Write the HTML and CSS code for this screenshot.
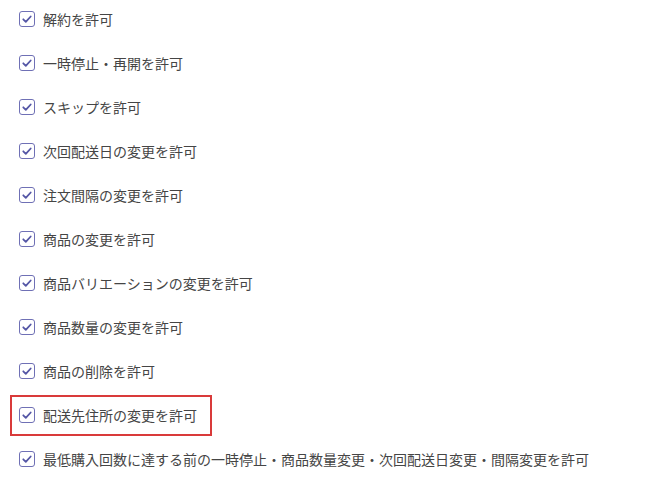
FILE: index.html
```html
<!DOCTYPE html>
<html lang="ja">
<head>
    <meta charset="UTF-8">
    <title>設定</title>
    <link rel="stylesheet" href="styles.css">
</head>
<body>

    <ul class="perm-list">
        <li class="perm"><span class="check"><svg viewBox="0 0 16 16"><path d="M4.3 8.3l2.5 2.5 4.9-5.3"/></svg></span>解約を許可</li>
        <li class="perm"><span class="check"><svg viewBox="0 0 16 16"><path d="M4.3 8.3l2.5 2.5 4.9-5.3"/></svg></span>一時停止・再開を許可</li>
        <li class="perm"><span class="check"><svg viewBox="0 0 16 16"><path d="M4.3 8.3l2.5 2.5 4.9-5.3"/></svg></span>スキップを許可</li>
        <li class="perm"><span class="check"><svg viewBox="0 0 16 16"><path d="M4.3 8.3l2.5 2.5 4.9-5.3"/></svg></span>次回配送日の変更を許可</li>
        <li class="perm"><span class="check"><svg viewBox="0 0 16 16"><path d="M4.3 8.3l2.5 2.5 4.9-5.3"/></svg></span>注文間隔の変更を許可</li>
        <li class="perm"><span class="check"><svg viewBox="0 0 16 16"><path d="M4.3 8.3l2.5 2.5 4.9-5.3"/></svg></span>商品の変更を許可</li>
        <li class="perm"><span class="check"><svg viewBox="0 0 16 16"><path d="M4.3 8.3l2.5 2.5 4.9-5.3"/></svg></span>商品バリエーションの変更を許可</li>
        <li class="perm"><span class="check"><svg viewBox="0 0 16 16"><path d="M4.3 8.3l2.5 2.5 4.9-5.3"/></svg></span>商品数量の変更を許可</li>
        <li class="perm"><span class="check"><svg viewBox="0 0 16 16"><path d="M4.3 8.3l2.5 2.5 4.9-5.3"/></svg></span>商品の削除を許可</li>
        <!-- 強調表示の行 -->
        <li class="perm highlight"><span class="check"><svg viewBox="0 0 16 16"><path d="M4.3 8.3l2.5 2.5 4.9-5.3"/></svg></span>配送先住所の変更を許可</li>
        <li class="perm"><span class="check"><svg viewBox="0 0 16 16"><path d="M4.3 8.3l2.5 2.5 4.9-5.3"/></svg></span>最低購入回数に達する前の一時停止・商品数量変更・次回配送日変更・間隔変更を許可</li>
    </ul>

</body>
</html>
```

FILE: styles.css
```css
body {
    margin: 0;
    background: #fff;
    font-family: "Noto Sans CJK JP", "Noto Sans", sans-serif;
    color: #454545;
}

.perm-list {
    list-style: none;
    margin: 0;
    padding: 7px 0 0 19px;
    display: flex;
    flex-direction: column;
    align-items: flex-start;
    gap: 20px;
}

.perm {
    display: flex;
    align-items: center;
    gap: 8px;
    height: 24px;
    font-size: 14px;
    line-height: 24px;
}

.check {
    position: relative;
    width: 16px;
    height: 16px;
    box-sizing: border-box;
    border: 1px solid #6f70b5;
    border-radius: 3px;
    flex-shrink: 0;
}

.check svg {
    position: absolute;
    left: -1px;
    top: -1px;
    width: 16px;
    height: 16px;
    fill: none;
    stroke: #5557a6;
    stroke-width: 1.8;
    stroke-linecap: round;
    stroke-linejoin: round;
}

.highlight {
    position: relative;
}

.highlight::after {
    content: "";
    position: absolute;
    top: -8px;
    bottom: -9px;
    left: -9px;
    right: -15px;
    border: 2px solid #d93a3a;
}
```
